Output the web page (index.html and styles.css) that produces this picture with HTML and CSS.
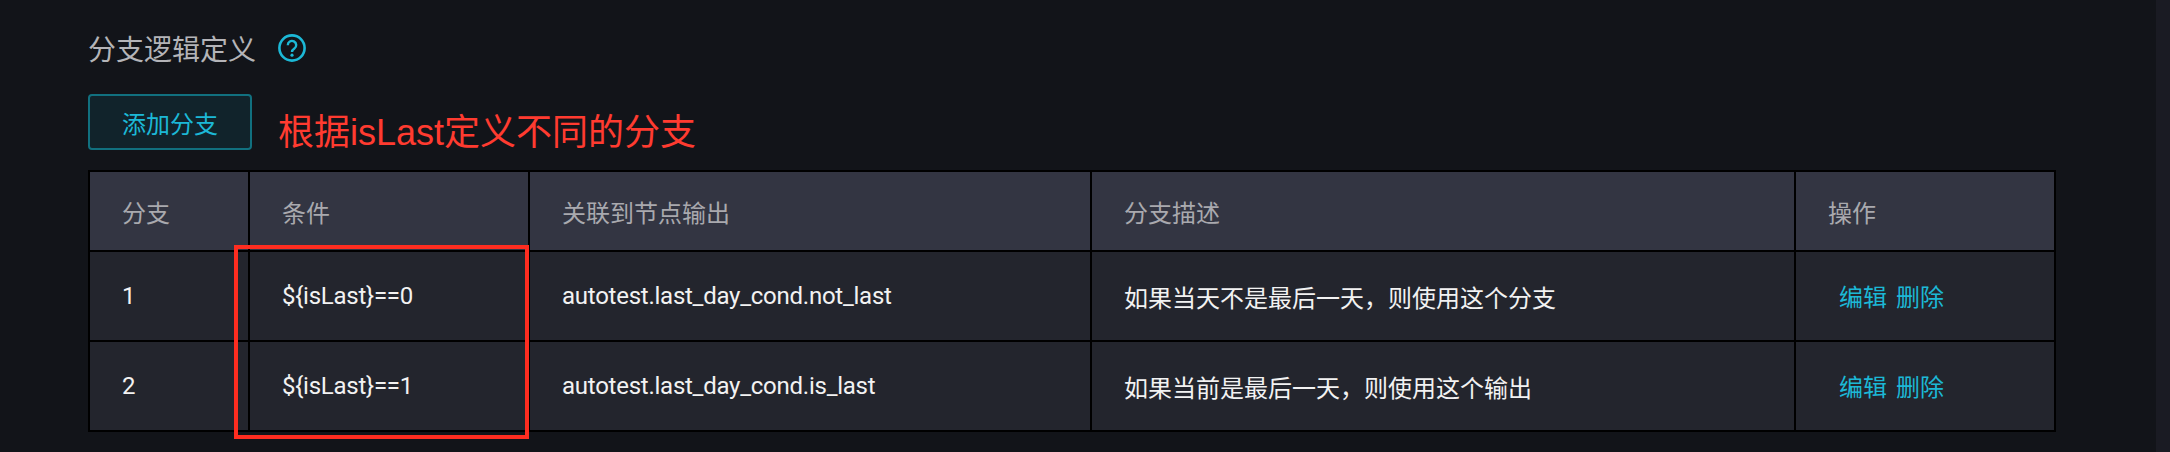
FILE: index.html
```html
<!DOCTYPE html>
<html lang="zh-CN">
<head>
  <meta charset="UTF-8">
  <title>分支逻辑定义</title>
  <link rel="stylesheet" href="styles.css">
</head>
<body>

<div class="page">
  <div class="title-row">
    <span class="title">分支逻辑定义</span>
    <svg class="help" width="28" height="28" viewBox="0 0 28 28" fill="none">
      <circle cx="14" cy="14" r="12.6" stroke="#1cb8d6" stroke-width="2.6"/>
      <path d="M9.8 11.2a4.2 4.2 0 1 1 6.6 3.4c-1.5 1-2.4 1.6-2.4 3.4" stroke="#1cb8d6" stroke-width="2.4"/>
      <circle cx="14" cy="21.2" r="1.6" fill="#1cb8d6"/>
    </svg>
  </div>

  <div class="action-row">
    <button class="btn-add">添加分支</button>
    <span class="note">根据isLast定义不同的分支</span>
  </div>

  <div class="table-wrap">
    <table class="branches">
      <colgroup>
        <col class="col-id">
        <col class="col-cond">
        <col class="col-output">
        <col class="col-desc">
        <col class="col-ops">
      </colgroup>
      <thead>
        <tr>
          <th>分支</th>
          <th>条件</th>
          <th>关联到节点输出</th>
          <th>分支描述</th>
          <th>操作</th>
        </tr>
      </thead>
      <tbody>
        <tr>
          <td>1</td>
          <td class="code">${isLast}==0</td>
          <td class="code">autotest.last_day_cond.not_last</td>
          <td>如果当天不是最后一天，则使用这个分支</td>
          <td class="ops"><a>编辑</a><a>删除</a></td>
        </tr>
        <tr>
          <td>2</td>
          <td class="code">${isLast}==1</td>
          <td class="code">autotest.last_day_cond.is_last</td>
          <td>如果当前是最后一天，则使用这个输出</td>
          <td class="ops"><a>编辑</a><a>删除</a></td>
        </tr>
      </tbody>
    </table>
    <div class="highlight"></div>
  </div>
</div>

<div class="track"></div>

</body>
</html>
```

FILE: styles.css
```css
html, body {
  height: 100%;
}
body {
  margin: 0;
  display: flex;
  height: 452px;
  overflow: hidden;
  background-color: #121419;
  font-family: Roboto, "Noto Sans CJK SC", sans-serif;
  font-size: 24px;
}
.page {
  flex: 1;
  padding: 34px 100px 0 88px;
}
.track {
  width: 14px;
  background-color: #1a1b23;
}
.title-row {
  display: flex;
  align-items: center;
  gap: 22px;
  height: 28px;
}
.title {
  font-size: 28px;
  line-height: 28px;
  color: #b4b4b8;
  position: relative;
  top: 3px;
}
.action-row {
  display: flex;
  align-items: flex-end;
  gap: 26px;
  margin-top: 32px;
}
.btn-add {
  width: 164px;
  height: 56px;
  padding: 0;
  border: 2px solid #11707f;
  border-radius: 4px;
  background-color: #11232b;
  color: #1cb8d6;
  font-family: inherit;
  font-size: 24px;
}
.note {
  font-family: "Liberation Sans", "Noto Sans CJK SC", sans-serif;
  font-size: 36px;
  line-height: 40px;
  color: #ff3b30;
  position: relative;
  top: 3px;
}
.table-wrap {
  position: relative;
  margin-top: 20px;
  width: 1968px;
}
.branches {
  width: 1968px;
  table-layout: fixed;
  border-collapse: separate;
  border-spacing: 2px;
  background-color: #000;
}
.col-id { width: 158px; }
.col-cond { width: 278px; }
.col-output { width: 560px; }
.col-desc { width: 702px; }
.col-ops { width: 258px; }
th, td {
  box-sizing: border-box;
  padding: 0 0 0 32px;
  text-align: left;
  font-weight: normal;
}
th {
  height: 78px;
  background-color: #333542;
  color: #a9a9ae;
}
td {
  height: 88px;
  background-color: #23252d;
  color: #f2f2f2;
}
.code {
  letter-spacing: -0.25px;
}
.ops {
  padding-left: 43px;
  padding-bottom: 2px;
}
.ops a {
  color: #1cb8d6;
  margin-right: 9px;
}
.highlight {
  position: absolute;
  left: 146px;
  top: 75px;
  width: 295px;
  height: 194px;
  box-sizing: border-box;
  border: 4px solid #ff2d20;
}
```
